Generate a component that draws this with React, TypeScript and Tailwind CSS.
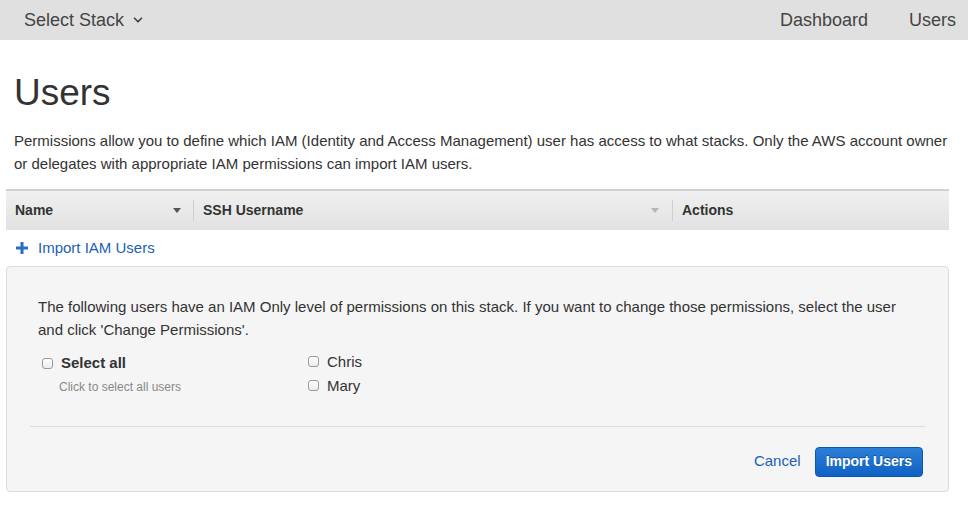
import { ChevronDown } from "lucide-react";

const font = { fontFamily: '"Liberation Sans", Arial, sans-serif' };

function Caret({ light }: { light?: boolean }) {
  return (
    <svg width="8" height="5" viewBox="0 0 8 5" className="shrink-0">
      <path d="M0 0h8L4 5z" fill={light ? "#b5b5b5" : "#555"} />
    </svg>
  );
}

function Box() {
  return (
    <span className="inline-block h-[11px] w-[11px] shrink-0 rounded-[3px] border border-[#9a9a9a] bg-gradient-to-b from-white to-[#ececec]" />
  );
}

export default function App() {
  return (
    <div className="h-[508px] w-[968px] overflow-hidden bg-white text-[#333]" style={font}>
      {/* Top bar */}
      <div className="flex h-10 items-center justify-between bg-[#e0e0e0] pl-6 pr-3 text-[18px] text-[#444]">
        <div className="flex items-center gap-[7px]">
          Select Stack
          <ChevronDown className="h-3.5 w-3.5" strokeWidth={3} />
        </div>
        <div className="flex items-center gap-[41px]">
          <span>Dashboard</span>
          <span>Users</span>
        </div>
      </div>

      <div className="px-[14px]">
        <h1 className="mt-[31px] text-[37px] leading-[44px] text-[#333]">Users</h1>
        <p className="mt-[14px] text-[15px] leading-[23px] text-[#333]">
          Permissions allow you to define which IAM (Identity and Access Management) user has access to what stacks. Only the AWS account owner
          <br />
          or delegates with appropriate IAM permissions can import IAM users.
        </p>
      </div>

      <div className="ml-[6px] mr-[19px]">
        {/* Table header */}
        <div className="mt-[14px] flex h-[41px] items-center border-t-2 border-[#d2d2d2] bg-gradient-to-b from-[#f0f0f0] to-[#e2e2e2] text-[14px] font-bold text-[#333]">
          <div className="flex w-[187px] items-center justify-between pl-[9px] pr-[12px]">
            <span>Name</span>
            <Caret />
          </div>
          <div className="h-[21px] w-px bg-[#cfcfcf]" />
          <div className="flex w-[478px] items-center justify-between pl-[9px] pr-[13px]">
            <span>SSH Username</span>
            <Caret light />
          </div>
          <div className="h-[21px] w-px bg-[#cfcfcf]" />
          <div className="pl-[9px]">Actions</div>
        </div>

        {/* Import link */}
        <div className="flex h-[36px] items-center gap-[10px] pl-[10px] text-[15px] text-[#1c5fb4]">
          <svg width="12" height="12" viewBox="0 0 12 12">
            <path d="M4.5 0h3v4.5H12v3H7.5V12h-3V7.5H0v-3h4.5z" fill="#2a6dc0" />
          </svg>
          <span>Import IAM Users</span>
        </div>

        {/* Panel */}
        <div className="rounded-[4px] border border-[#dcdcdc] bg-[#f5f5f5] px-[23px] pb-[14px] pt-[28px]">
          <p className="pl-[8px] text-[15px] leading-[23px] text-[#333]">
            The following users have an IAM Only level of permissions on this stack. If you want to change those permissions, select the user
            <br />
            and click 'Change Permissions'.
          </p>
          <div className="mt-[11px] flex pl-[12px]">
            <div className="w-[266px]">
              <label className="flex items-center gap-[8px] text-[15px] font-bold text-[#333]">
                <Box />
                Select all
              </label>
              <div className="mt-[3px] pl-[17px] text-[12px] text-[#888]">Click to select all users</div>
            </div>
            <div className="flex flex-col gap-[5px] text-[15px] text-[#333]">
              <label className="flex items-center gap-[8px] leading-[19px]">
                <Box />
                Chris
              </label>
              <label className="flex items-center gap-[8px] leading-[19px]">
                <Box />
                Mary
              </label>
            </div>
          </div>
          <div className="mt-[30px] border-t border-[#dedede]" />
          <div className="mt-[20px] flex items-center justify-end gap-[14px] pr-[2px]">
            <span className="text-[15px] text-[#1c5fb4]">Cancel</span>
            <button
              className="h-[30px] rounded-[4px] border border-[#0f55a8] bg-gradient-to-b from-[#2a7fd8] to-[#0f62c4] px-[10px] text-[14px] font-bold text-white [text-shadow:0_-1px_0_rgba(0,0,0,0.35)]"
              style={font}
            >
              Import Users
            </button>
          </div>
        </div>
      </div>
    </div>
  );
}
